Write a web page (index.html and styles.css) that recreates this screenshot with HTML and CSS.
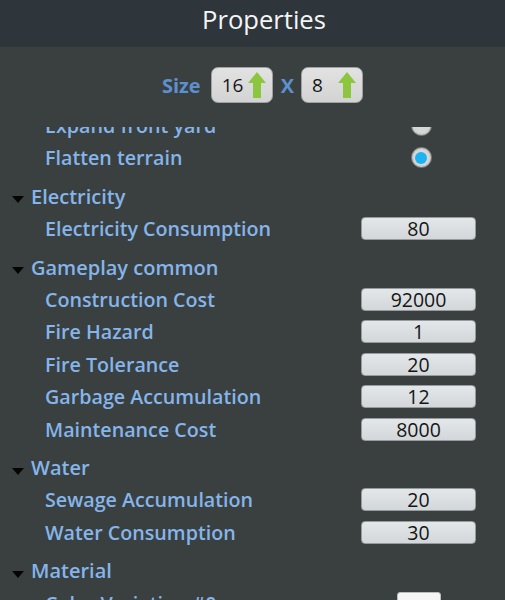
FILE: index.html
```html
<!DOCTYPE html>
<html>
<head>
<meta charset="utf-8">
<link rel="stylesheet" href="styles.css">
</head>
<body>
<div class="panel">
  <div class="titlebar"><span class="title">Properties</span></div>
  <div class="size-row">
    <span class="size-label">Size</span>
    <div class="spin">
      <span class="spin-val">16</span>
      <svg class="arrow" viewBox="0 0 18 26" width="18" height="26"><polygon points="9,0 18,11 13,11 13,26 5,26 5,11 0,11" fill="#8cc63e"/></svg>
    </div>
    <span class="size-x">X</span>
    <div class="spin">
      <span class="spin-val">8</span>
      <svg class="arrow" viewBox="0 0 18 26" width="18" height="26"><polygon points="9,0 18,11 13,11 13,26 5,26 5,11 0,11" fill="#8cc63e"/></svg>
    </div>
  </div>
  <div class="viewport">
    <div class="list">
      <div class="row"><span class="label">Expand front yard</span><span class="radio-cell"><span class="radio"></span></span></div>
      <div class="row"><span class="label">Flatten terrain</span><span class="radio-cell"><span class="radio on"></span></span></div>
      <div class="row group"><span class="tri"></span><span class="group-label">Electricity</span></div>
      <div class="row"><span class="label">Electricity Consumption</span><span class="value">80</span></div>
      <div class="row group"><span class="tri"></span><span class="group-label">Gameplay common</span></div>
      <div class="row"><span class="label">Construction Cost</span><span class="value">92000</span></div>
      <div class="row"><span class="label">Fire Hazard</span><span class="value">1</span></div>
      <div class="row"><span class="label">Fire Tolerance</span><span class="value">20</span></div>
      <div class="row"><span class="label">Garbage Accumulation</span><span class="value">12</span></div>
      <div class="row"><span class="label">Maintenance Cost</span><span class="value">8000</span></div>
      <div class="row group"><span class="tri"></span><span class="group-label">Water</span></div>
      <div class="row"><span class="label">Sewage Accumulation</span><span class="value">20</span></div>
      <div class="row"><span class="label">Water Consumption</span><span class="value">30</span></div>
      <div class="row group"><span class="tri"></span><span class="group-label">Material</span></div>
      <div class="row"><span class="label">Color Variation #0</span><span class="color-cell"><span class="swatch"></span></span></div>
    </div>
  </div>
</div>
</body>
</html>
```

FILE: styles.css
```css
html, body {
  margin: 0;
  padding: 0;
}
body {
  width: 505px;
  height: 600px;
  overflow: hidden;
  background: #3a3f3f;
  font-family: "Open Sans", "Noto Sans", sans-serif;
}
.panel {
  display: flex;
  flex-direction: column;
  height: 600px;
}
.titlebar {
  height: 47px;
  background: #2e353b;
  display: flex;
  align-items: center;
  justify-content: center;
  flex-shrink: 0;
}
.title {
  color: #f4f6f6;
  font-size: 25.6px;
  padding-left: 23px;
  line-height: 1;
  margin-top: -7px;
}
.size-row {
  display: flex;
  align-items: center;
  justify-content: center;
  padding-top: 20px;
  padding-left: 20px;
  height: 36px;
  flex-shrink: 0;
}
.size-label {
  color: #5c90cf;
  font-weight: 700;
  font-size: 20px;
  margin-right: 10px;
}
.size-x {
  color: #5c90cf;
  font-weight: 700;
  font-size: 20px;
  margin: 0 7px 0 8px;
}
.spin {
  box-sizing: border-box;
  width: 62px;
  height: 36px;
  background: linear-gradient(#e2e2e2, #d2d3d2);
  border: 1px solid #9ea2a2;
  border-radius: 7px;
  display: flex;
  align-items: center;
  padding-left: 10px;
}
.spin-val {
  color: #161616;
  font-size: 19px;
  width: 26px;
}
.arrow {
  display: block;
}
.viewport {
  margin-top: 24px;
  flex: 1;
  overflow: hidden;
}
.list {
  margin-top: -17.6px;
}
.row {
  height: 32.4px;
  display: flex;
  align-items: center;
  padding-right: 29px;
}
.row.group {
  margin-top: 6px;
}
.label {
  color: #85b5ea;
  font-weight: 600;
  font-size: 19.7px;
  padding-left: 45px;
  margin-right: auto;
  white-space: nowrap;
}
.group-label {
  color: #85b5ea;
  font-weight: 600;
  font-size: 20px;
  white-space: nowrap;
}
.tri {
  width: 0;
  height: 0;
  border-left: 6px solid transparent;
  border-right: 6px solid transparent;
  border-top: 7px solid #050505;
  margin-left: 12px;
  margin-right: 7px;
  margin-top: 7px;
}
.value {
  box-sizing: border-box;
  width: 115px;
  height: 23px;
  background: linear-gradient(#e3e7e9, #d3d7da);
  border: 1px solid #959b9e;
  border-radius: 4px;
  color: #151515;
  font-size: 19.5px;
  line-height: 21px;
  text-align: center;
}
.radio-cell {
  width: 115px;
  display: flex;
  justify-content: center;
  padding-left: 5px;
  box-sizing: border-box;
}
.radio {
  box-sizing: border-box;
  width: 21px;
  height: 21px;
  border-radius: 50%;
  background: radial-gradient(circle, #d6d8d8 55%, #9a9d9d 100%);
  border: 1px solid #7e8383;
  position: relative;
}
.radio.on::after {
  content: "";
  position: absolute;
  left: 3.5px;
  top: 3.5px;
  width: 12px;
  height: 12px;
  border-radius: 50%;
  background: #1cb3f2;
}
.color-cell {
  width: 115px;
  display: flex;
  padding-left: 36px;
  box-sizing: border-box;
}
.swatch {
  box-sizing: border-box;
  width: 44px;
  height: 22px;
  background: #f5f5f5;
  border: 1px solid #b9bcbc;
  border-radius: 3px;
}
```
